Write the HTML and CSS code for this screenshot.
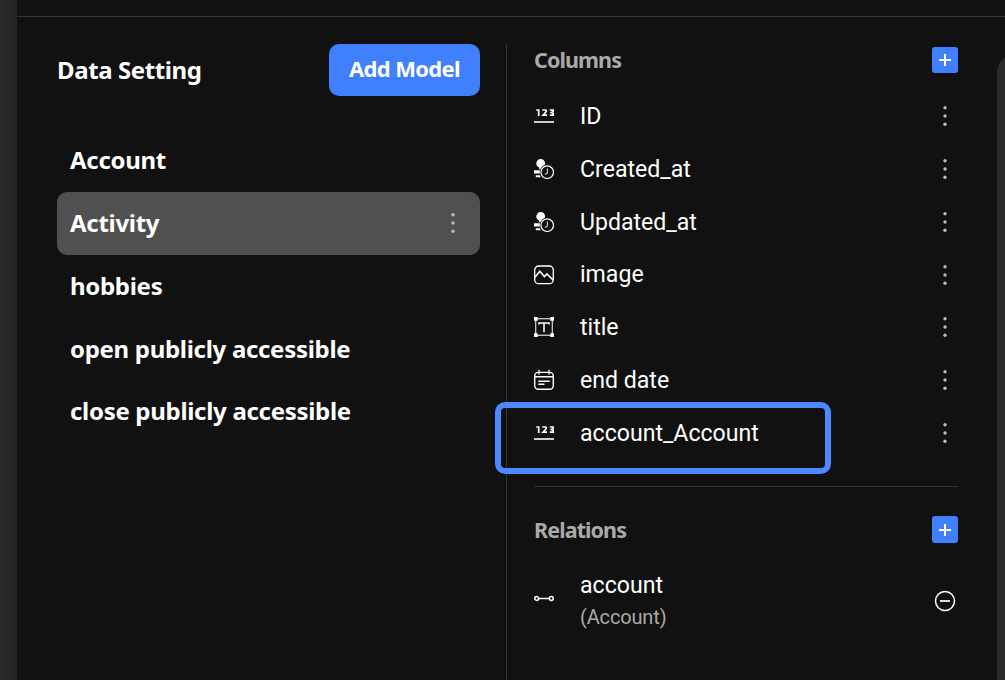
FILE: index.html
```
<!DOCTYPE html>
<html lang="en">
<head>
<meta charset="utf-8">
<title>Data Setting</title>
<link rel="stylesheet" href="styles.css">
</head>
<body>
<svg class="sprite" aria-hidden="true">
  <symbol id="dots" viewBox="0 0 6 22"><circle cx="3" cy="2.800" r="1.700"/><circle cx="3" cy="11" r="1.700"/><circle cx="3" cy="19.200" r="1.700"/></symbol>
  <symbol id="number" viewBox="0 0 20 20">
    <path d="M2.300 4H4.700V10M8.300 4H11.400Q12.600 4.100 12.200 5.400Q11.500 6.900 9.200 9.100H13M15.800 4H19.300V5.600L17.500 6.500L19.300 7.500V9.100H15.800" fill="none" stroke="#fff" stroke-width="1.700"/>
    <path d="M0 16H20" stroke="#ccc" stroke-width="2"/>
  </symbol>
  <symbol id="stamp" viewBox="0 0 20 20">
    <path d="M6.800 0A4.300 4.300 0 0 1 11.100 4.300Q11.100 5.100 10.700 5.800Q7.500 7.200 6.300 10.300L5.300 10.500L5 8.200A4.300 4.300 0 0 1 6.800 0Z" fill="#fff"/>
    <path d="M2.800 3A4.200 4.200 0 0 0 5 8.200L7 8L7 2Z" fill="#fff"/>
    <path d="M0 11.300H5.800V14.500H0ZM1.800 16.300H5.800L6.800 18.200H1.800Z" fill="#fff"/>
    <circle cx="13.200" cy="13.200" r="6.300" fill="none" stroke="#fff" stroke-width="1.200"/>
    <path d="M13.400 9.400V14L10.900 15.600" fill="none" stroke="#ccc" stroke-width="1.200"/>
  </symbol>
  <symbol id="image" viewBox="0 0 20 20">
    <rect x=".7" y="1" width="18.600" height="17.700" rx="4" fill="none" stroke="#fff" stroke-width="1.300"/>
    <path d="M1 12.200L5.800 6.300L10.400 11.500L12.900 8.900L19.300 15.300" fill="none" stroke="#fff" stroke-width="1.600"/>
  </symbol>
  <symbol id="text" viewBox="0 0 20 20">
    <rect x="1.700" y="1.700" width="16.600" height="16.600" fill="none" stroke="#ccc" stroke-width="1.300"/>
    <path d="M0 0H3.700V3.700H0ZM16.300 0H20V3.700H16.300ZM0 16.300H3.700V20H0ZM16.300 16.300H20V20H16.300Z" fill="#fff"/>
    <path d="M5 7.500V6H15V7.500M10 6V15.300" fill="none" stroke="#fff" stroke-width="1.500"/>
  </symbol>
  <symbol id="calendar" viewBox="0 0 20 20">
    <rect x=".7" y="2.400" width="18.600" height="16.800" rx="3.500" fill="none" stroke="#fff" stroke-width="1.400"/>
    <path d="M1 6.700H19M5 0V4.500M15 0V4.500M4.300 11.200H15.800M4.300 14.300H10.500" fill="none" stroke="#fff" stroke-width="1.400"/>
  </symbol>
  <symbol id="link" viewBox="0 0 20 20">
    <path d="M5 10.500H15" stroke="#fff" stroke-width="1.500"/>
    <g fill="none" stroke="#fff" stroke-width="1.500"><circle cx="2.700" cy="10.500" r="1.900"/><circle cx="17.300" cy="10.500" r="1.900"/></g>
  </symbol>
  <symbol id="plus" viewBox="0 0 12 12"><path d="M0 6H12M6 0V12" stroke="#fff" stroke-width="2"/></symbol>
  <symbol id="minus" viewBox="0 0 22 22"><circle cx="11" cy="11" r="9.500" fill="none" stroke="#fff" stroke-width="1.500"/><path d="M6 11H16" stroke="#ddd" stroke-width="2"/></symbol>
</svg>
<div class="app">
  <div class="rail"></div>
  <div class="content">
    <div class="topbar"></div>
    <div class="panels">
      <section class="models">
        <header class="models-head"><h1 class="title">Data Setting</h1><button class="add">Add Model</button></header>
        <ul class="list">
          <li class="model"><span class="label">Account</span></li>
          <li class="model selected"><span class="label">Activity</span><svg class="dots"><use href="#dots"/></svg></li>
          <li class="model"><span class="label">hobbies</span></li>
          <li class="model"><span class="label">open publicly accessible</span></li>
          <li class="model"><span class="label">close publicly accessible</span></li>
        </ul>
      </section>
      <section class="details">
        <header class="section-head"><h2 class="subtitle">Columns</h2><button class="plus"><svg><use href="#plus"/></svg></button></header>
        <ul class="list columns">
          <li class="field"><svg class="icon"><use href="#number"/></svg><span class="name">ID</span><svg class="dots"><use href="#dots"/></svg></li>
          <li class="field"><svg class="icon"><use href="#stamp"/></svg><span class="name">Created_at</span><svg class="dots"><use href="#dots"/></svg></li>
          <li class="field"><svg class="icon"><use href="#stamp"/></svg><span class="name">Updated_at</span><svg class="dots"><use href="#dots"/></svg></li>
          <li class="field"><svg class="icon"><use href="#image"/></svg><span class="name">image</span><svg class="dots"><use href="#dots"/></svg></li>
          <li class="field"><svg class="icon"><use href="#text"/></svg><span class="name">title</span><svg class="dots"><use href="#dots"/></svg></li>
          <li class="field"><svg class="icon"><use href="#calendar"/></svg><span class="name">end date</span><svg class="dots"><use href="#dots"/></svg></li>
          <li class="field marked"><svg class="icon"><use href="#number"/></svg><span class="name">account_Account</span><svg class="dots"><use href="#dots"/></svg></li>
        </ul>
        <header class="section-head relations-head"><h2 class="subtitle">Relations</h2><button class="plus tall"><svg><use href="#plus"/></svg></button></header>
        <div class="relation">
          <svg class="icon link"><use href="#link"/></svg>
          <div class="relation-text"><span class="source">account</span><span class="target">(Account)</span></div>
          <svg class="minus"><use href="#minus"/></svg>
        </div>
      </section>
      <aside class="canvas"></aside>
    </div>
  </div>
</div>
</body>
</html>
```
FILE: styles.css
```
*, *::after { box-sizing: border-box; }
body { margin: 0; background: #111; color: #fff; font-family: "Noto Sans", sans-serif; overflow: hidden; }
h1, h2, ul { margin: 0; padding: 0; }
button { border: 0; padding: 0; color: #fff; font-family: inherit; background: #4080ff; }
svg { display: block; flex: none; }
.sprite { position: absolute; width: 0; height: 0; }
.app { display: flex; height: 680px; }
.rail { width: 17px; flex: none; background: linear-gradient(90deg, #2b2b2b, #252525); }
.content { flex: 1; display: flex; flex-direction: column; min-width: 0; }
.topbar { height: 17px; border-bottom: 1px solid #363636; }
.panels { flex: 1; display: flex; padding-top: 27px; }
.models { width: 463px; flex: none; padding-left: 40px; }
.models-head { display: flex; justify-content: space-between; align-items: center; height: 52px; }
.title { font-size: 24px; line-height: 32px; letter-spacing: -.4px; }
.add { width: 151px; height: 52px; padding-bottom: 4px; border-radius: 10px; font-size: 22px; font-weight: 700; letter-spacing: -.65px; }
.list { list-style: none; }
.models .list { margin-top: 33.400px; }
.model { display: flex; align-items: center; justify-content: space-between; height: 62.800px; padding: 0 24px 0 13px; border-radius: 10px; font-size: 24px; font-weight: 700; letter-spacing: -.3px; }
.label { padding-bottom: 2px; }
.selected { background: #505050; }
.selected .dots { margin-bottom: 2px; }
.dots { width: 6px; height: 22px; fill: #bbb; }
.details { width: 452px; flex: none; margin-left: 26px; border-left: 1px solid #333; padding-left: 27px; }
.section-head { display: flex; align-items: center; justify-content: space-between; height: 32px; }
.subtitle { font-size: 21.500px; line-height: 30px; letter-spacing: -.9px; color: #aaa; }
.plus { width: 26px; height: 26px; border-radius: 3px; display: flex; align-items: center; justify-content: center; }
.plus svg { width: 12px; height: 12px; }
.tall { height: 27px; }
.columns { margin-top: 13.600px; padding-bottom: 26px; border-bottom: 1px solid #333; }
.field { position: relative; display: flex; align-items: center; height: 52.850px; padding-right: 10px; font-family: Roboto, sans-serif; font-size: 23.100px; }
.icon { width: 20px; height: 20px; margin-right: 26px; }
.name { flex: 1; padding-top: .7px; }
.marked::after { content: ""; position: absolute; left: -39px; top: -5px; width: 336px; height: 72px; border: 6px solid #4c88ff; border-radius: 10px; }
.relations-head { margin-top: 27px; }
.relation { display: flex; align-items: center; height: 64px; margin-top: 23px; padding-right: 2px; font-family: Roboto, sans-serif; font-size: 23.100px; line-height: 32px; }
.link { margin-bottom: 6px; }
.relation-text { flex: 1; display: flex; flex-direction: column; }
.source { padding-top: 1px; line-height: 31px; }
.source { padding-top: 2px; line-height: 30px; }
.target { font-size: 20px; letter-spacing: -.15px; color: #aaa; }
.minus { width: 22px; height: 22px; }
.canvas { flex: 1; margin: 9px 0 0 39px; background: radial-gradient(circle at 20px 20px, #2a2a2a 19.500px, transparent 20.500px) 0 0 / 100% 20px no-repeat, linear-gradient(#2a2a2a, #2a2a2a) 0 20px / 100% 100% no-repeat; }
```
